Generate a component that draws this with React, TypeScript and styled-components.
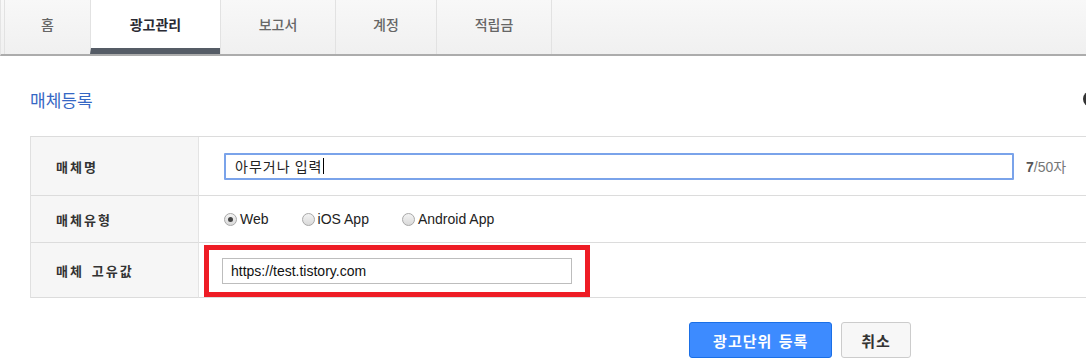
import styled, { createGlobalStyle } from 'styled-components';

const GlobalStyle = createGlobalStyle`
  body {
    margin: 0;
    background: #fff;
    font-family: "Liberation Sans", "Noto Sans CJK KR", sans-serif;
    overflow: hidden;
  }
`;

const NavBar = styled.nav`
  display: flex;
  height: 56px;
  padding-left: 3px;
  background: linear-gradient(#f8f8f8, #f0f0f0);
  border-bottom: 2px solid #acacac;
  border-left: 1px solid #e4e4e4;
  box-sizing: border-box;
`;

const Tab = styled.div<{ $width: number; $active?: boolean }>`
  display: flex;
  align-items: center;
  justify-content: center;
  width: ${(p) => p.$width}px;
  height: 54px;
  padding-bottom: 6px;
  box-sizing: border-box;
  border-left: 1px solid #e2e2e2;
  background: ${(p) => (p.$active ? '#fff' : 'transparent')};
  border-bottom: ${(p) => (p.$active ? '6px solid #555c66' : 'none')};
  padding-top: ${(p) => (p.$active ? '6px' : '0')};
  font-family: "Noto Sans CJK KR", sans-serif;
  font-size: 14px;
  font-weight: ${(p) => (p.$active ? 700 : 500)};
  color: ${(p) => (p.$active ? '#2a2a33' : '#666')};

  &:last-child {
    border-right: 1px solid #e2e2e2;
  }
`;

const Content = styled.main`
  width: 1540px;
  margin-left: 30px;
`;

const HeaderRow = styled.div`
  display: flex;
  align-items: center;
  justify-content: space-between;
  width: 1069px;
  height: 80px;
  padding-top: 6px;
  box-sizing: border-box;
`;

const Title = styled.h2`
  margin: 0;
  font-family: "Noto Sans CJK KR", sans-serif;
  font-size: 17px;
  font-weight: 400;
  color: #3567c4;
`;

const HelpDot = styled.span`
  width: 16px;
  height: 16px;
  border-radius: 50%;
  background: #333;
`;

const Table = styled.div`
  display: grid;
  grid-template-columns: 168px 1fr;
  border-top: 1px solid #dcdcdc;
  border-left: 1px solid #e0e0e0;
`;

const Label = styled.div<{ $height: number }>`
  display: flex;
  align-items: center;
  height: ${(p) => p.$height}px;
  padding-left: 25px;
  background: #f6f6f6;
  border-right: 1px solid #e4e4e4;
  border-bottom: 1px solid #dcdcdc;
  font-family: "Noto Sans CJK KR", sans-serif;
  font-size: 13px;
  font-weight: 700;
  letter-spacing: 2px;
  word-spacing: 3px;
  color: #333;
`;

const Cell = styled.div<{ $height: number }>`
  display: flex;
  align-items: center;
  height: ${(p) => p.$height}px;
  padding-left: 25px;
  border-bottom: 1px solid #dcdcdc;
`;

const FocusField = styled.div`
  display: flex;
  align-items: center;
  width: 790px;
  height: 27px;
  padding-left: 9px;
  box-sizing: border-box;
  border: 2px solid #7aa3ea;
  border-radius: 1px;
  font-family: "Noto Sans CJK KR", sans-serif;
  font-size: 14px;
  color: #222;
  letter-spacing: 1px;
`;

const Caret = styled.span`
  display: inline-block;
  width: 1px;
  height: 16px;
  margin-left: 1px;
  background: #000;
`;

const Counter = styled.span`
  margin-left: 12px;
  font-size: 14px;
  color: #777;

  b {
    color: #555;
    font-weight: 700;
  }
`;

const RadioGroup = styled.div`
  display: flex;
  gap: 33px;
`;

const RadioItem = styled.label`
  display: flex;
  align-items: center;
  gap: 3px;
  font-size: 14px;
  color: #222;
`;

const RadioCircle = styled.span<{ $checked?: boolean }>`
  position: relative;
  width: 13px;
  height: 13px;
  border-radius: 50%;
  border: 1px solid #a8a8a8;
  box-sizing: border-box;
  background: linear-gradient(#f4f4f4, #d9d9d9);

  &::after {
    content: '';
    display: ${(p) => (p.$checked ? 'block' : 'none')};
    position: absolute;
    left: 3px;
    top: 3px;
    width: 5px;
    height: 5px;
    border-radius: 50%;
    background: #444;
  }
`;

const Highlight = styled.div`
  margin-left: -20px;
  margin-top: 2px;
  padding: 8px 13px;
  border: 5px solid #ee1c25;
`;

const PlainField = styled.div`
  display: flex;
  align-items: center;
  width: 350px;
  height: 26px;
  padding-left: 8px;
  box-sizing: border-box;
  border: 1px solid #bdbdbd;
  font-size: 14px;
  color: #111;
`;

const ButtonRow = styled.div`
  display: flex;
  justify-content: center;
  gap: 9px;
  padding-top: 24px;
`;

const Button = styled.button<{ $primary?: boolean }>`
  height: 36px;
  padding: 0 ${(p) => (p.$primary ? 23 : 19)}px;
  border-radius: 3px;
  border: 1px solid ${(p) => (p.$primary ? '#1a6fe6' : '#cccccc')};
  background: ${(p) => (p.$primary ? '#3d8bff' : '#f7f7f7')};
  color: ${(p) => (p.$primary ? '#fff' : '#333')};
  font-family: "Noto Sans CJK KR", sans-serif;
  font-size: 15px;
  font-weight: 700;
  letter-spacing: 1px;
  word-spacing: 2px;
  cursor: pointer;
`;

const tabs = [
  { label: '홈', width: 86 },
  { label: '광고관리', width: 130, active: true },
  { label: '보고서', width: 115 },
  { label: '계정', width: 101 },
  { label: '적립금', width: 116 },
];

export default function App(): JSX.Element {
  return (
    <>
      <GlobalStyle />
      <NavBar>
        {tabs.map((t) => (
          <Tab key={t.label} $width={t.width} $active={t.active}>
            {t.label}
          </Tab>
        ))}
      </NavBar>

      <Content>
        <HeaderRow>
          <Title>매체등록</Title>
          <HelpDot />
        </HeaderRow>

        <Table>
          <Label $height={58}>매체명</Label>
          <Cell $height={58}>
            <FocusField>
              아무거나 입력
              <Caret />
            </FocusField>
            <Counter>
              <b>7</b>/50자
            </Counter>
          </Cell>

          <Label $height={46}>매체유형</Label>
          <Cell $height={46}>
            <RadioGroup>
              <RadioItem>
                <RadioCircle $checked />
                Web
              </RadioItem>
              <RadioItem>
                <RadioCircle />
                iOS App
              </RadioItem>
              <RadioItem>
                <RadioCircle />
                Android App
              </RadioItem>
            </RadioGroup>
          </Cell>

          <Label $height={54}>매체 고유값</Label>
          <Cell $height={54}>
            <Highlight>
              <PlainField>https://test.tistory.com</PlainField>
            </Highlight>
          </Cell>
        </Table>

        <ButtonRow>
          <Button $primary>광고단위 등록</Button>
          <Button>취소</Button>
        </ButtonRow>
      </Content>
    </>
  );
}
